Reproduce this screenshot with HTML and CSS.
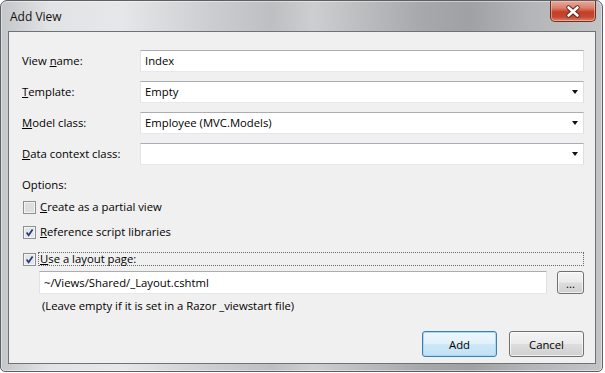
FILE: index.html
```html
<!DOCTYPE html>
<html lang="en">
<head>
    <meta charset="UTF-8">
    <title>Add View</title>
    <link rel="stylesheet" href="styles.css">
</head>
<body>

    <div class="window">
        <!-- Title bar -->
        <div class="titlebar">
            <span class="title">Add View</span>
            <div class="close">
                <svg width="46" height="21" viewBox="0 0 46 21">
                    <path d="M18.5 6.5 L27.5 14.5 M27.5 6.5 L18.5 14.5" stroke="#5a2418" stroke-width="4.4" stroke-linecap="round"/>
                    <path d="M18.5 6.5 L27.5 14.5 M27.5 6.5 L18.5 14.5" stroke="#ffffff" stroke-width="2.6" stroke-linecap="round"/>
                </svg>
            </div>
        </div>

        <div class="client">
            <div class="form-grid">
                <label>View <u>n</u>ame:</label>
                <div class="field">Index</div>

                <label><u>T</u>emplate:</label>
                <div class="field combo">Empty<span class="arrow"></span></div>

                <label><u>M</u>odel class:</label>
                <div class="field combo">Employee (MVC.Models)<span class="arrow"></span></div>

                <label><u>D</u>ata context class:</label>
                <div class="field combo"><span class="arrow"></span></div>
            </div>

            <div class="options-label">Options:</div>

            <div class="check-list">
                <div class="check-row">
                    <svg class="checkbox" width="13" height="13" viewBox="0 0 13 13">
                        <rect x="0.5" y="0.5" width="12" height="12" fill="#f4f4f4" stroke="#8e8f8f"/>
                        <rect x="2" y="2" width="9" height="9" fill="#dcdedf"/>
                    </svg>
                    <span class="check-text"><u>C</u>reate as a partial view</span>
                </div>
                <div class="check-row">
                    <svg class="checkbox" width="13" height="13" viewBox="0 0 13 13">
                        <rect x="0.5" y="0.5" width="12" height="12" fill="#f4f4f4" stroke="#8e8f8f"/>
                        <rect x="2" y="2" width="9" height="9" fill="#e4e6e8"/>
                        <path d="M3.6 6.6 L5.6 9.2 L9.6 3.6" fill="none" stroke="#22397a" stroke-width="1.7"/>
                    </svg>
                    <span class="check-text"><u>R</u>eference script libraries</span>
                </div>
                <div class="check-row focused">
                    <svg class="checkbox" width="13" height="13" viewBox="0 0 13 13">
                        <rect x="0.5" y="0.5" width="12" height="12" fill="#f4f4f4" stroke="#8e8f8f"/>
                        <rect x="2" y="2" width="9" height="9" fill="#e4e6e8"/>
                        <path d="M3.6 6.6 L5.6 9.2 L9.6 3.6" fill="none" stroke="#22397a" stroke-width="1.7"/>
                    </svg>
                    <span class="check-text"><u>U</u>se a layout page:</span>
                </div>
            </div>

            <div class="path-row">
                <div class="field">~/Views/Shared/_Layout.cshtml</div>
                <button class="btn browse">...</button>
            </div>

            <div class="hint">(Leave empty if it is set in a Razor _viewstart file)</div>

            <div class="actions">
                <button class="btn default">Add</button>
                <button class="btn">Cancel</button>
            </div>
        </div>
    </div>

</body>
</html>
```

FILE: styles.css
```css
* {
    box-sizing: border-box;
    margin: 0;
    padding: 0;
}

body {
    background: #ffffff;
    font-family: "Open Sans", "DejaVu Sans", sans-serif;
    font-size: 11.3px;
    color: #000000;
}

/* Window frame */
.window {
    width: 603px;
    height: 372px;
    display: flex;
    flex-direction: column;
    padding: 0 6px 7px 7px;
    border: 1px solid #5c6065;
    border-radius: 7px 7px 5px 5px;
    background: linear-gradient(90deg, #c4c7ca 0%, #e1e3e4 8%, #e6e7e8 20%, #cbcdcf 35%, #bdbfc1 45%, #cdcecf 52%, #a6a8aa 70%, #9fa1a3 78%, #b3b5b7 88%, #c2c4c6 100%);
    box-shadow: inset 0 0 0 1px rgba(255, 255, 255, 0.45);
}

.titlebar {
    height: 30px;
    flex: none;
    display: flex;
    align-items: flex-start;
}

.title {
    margin: 8px 0 0 2px;
    font-size: 12px;
    line-height: 16px;
    color: #111111;
}

.close {
    margin-left: auto;
    width: 46px;
    height: 21px;
    border: 1px solid #6e2f24;
    border-top: none;
    border-radius: 0 0 5px 5px;
    background: linear-gradient(#e9a898 0%, #d9806b 35%, #c23f29 55%, #c64831 80%, #dc836c 100%);
    box-shadow: inset 0 0 0 1px rgba(255, 210, 200, 0.5);
}

.close svg {
    display: block;
    margin-left: -1px;
}

/* Client area */
.client {
    flex: 1;
    display: flex;
    flex-direction: column;
    padding: 18px 11px 6px 13px;
    border: 1px solid #6d7277;
    background: #f0f0f0;
}

.form-grid {
    display: grid;
    grid-template-columns: 118px 1fr;
    row-gap: 9px;
    align-items: center;
}

label {
    line-height: 16px;
}

.field {
    position: relative;
    height: 22px;
    padding-left: 4px;
    line-height: 20px;
    background: #ffffff;
    border: 1px solid;
    border-color: #abadb3 #dbdfe6 #e3e9ef #e2e3ea;
    white-space: nowrap;
}

.arrow {
    position: absolute;
    right: 5px;
    top: 8px;
    border-left: 3.5px solid transparent;
    border-right: 3.5px solid transparent;
    border-top: 4px solid #111111;
}

.options-label {
    margin-top: 12px;
    line-height: 16px;
}

/* Check boxes */
.check-list {
    display: flex;
    flex-direction: column;
    gap: 9px;
    margin-top: 6px;
}

.check-row {
    display: flex;
    align-items: center;
    height: 16px;
}

.checkbox {
    flex: none;
    margin-left: 1px;
}

.check-text {
    margin-left: 2px;
    padding-left: 1px;
    height: 14px;
    line-height: 12px;
    border: 1px dotted transparent;
}

.check-row.focused {
    margin-top: 2px;
}

.check-row.focused .check-text {
    flex: 1;
    border-color: #6a6a6a;
}

.path-row {
    display: flex;
    gap: 10px;
    margin: 4px 0 0 17px;
}

.path-row .field {
    flex: 1;
    height: 23px;
    padding-left: 4px;
    line-height: 21px;
}

.hint {
    margin: 4px 0 0 20px;
    line-height: 16px;
}

/* Buttons */
.actions {
    margin-top: auto;
    display: flex;
    justify-content: flex-end;
    gap: 12px;
}

.btn {
    width: 75px;
    height: 26px;
    font-family: inherit;
    font-size: 11.3px;
    color: #000000;
    border: 1px solid #707070;
    border-radius: 3px;
    background: linear-gradient(#f3f3f3 0%, #ebebeb 48%, #dddddd 52%, #d0d0d0 100%);
    box-shadow: inset 0 0 0 1px rgba(255, 255, 255, 0.7);
}

.btn.default {
    border-color: #3d7fb3;
    background: linear-gradient(#eef7fc 0%, #e1f1fa 48%, #cde8f7 52%, #c0e1f4 100%);
    box-shadow: inset 0 0 0 1px #a9d9f2;
}

.btn.browse {
    width: 27px;
    height: 23px;
    line-height: 14px;
    padding-top: 2px;
}
```
